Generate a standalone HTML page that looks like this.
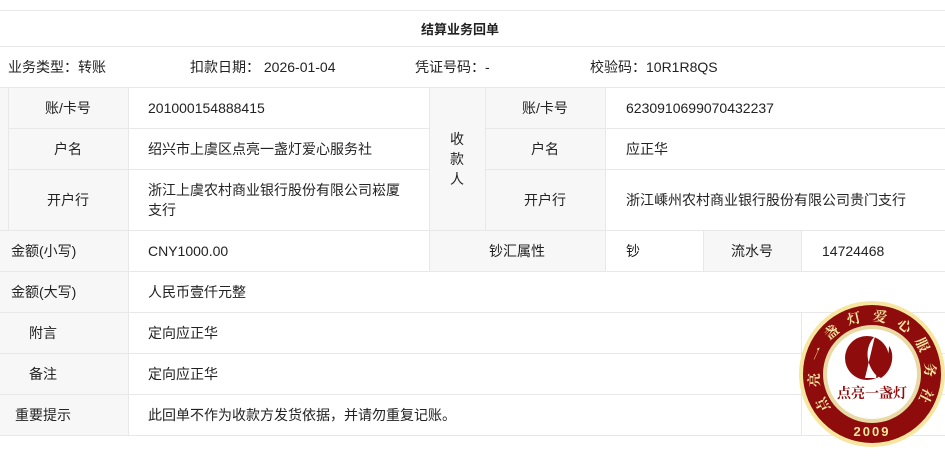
<!DOCTYPE html>
<html><head><meta charset="utf-8"><style>
body{margin:0;width:945px;height:457px;background:#fff;font-family:"Liberation Sans","Noto Sans CJK SC",sans-serif;font-size:14px;color:#222;position:relative;overflow:hidden}
.c{position:absolute;box-sizing:border-box;display:flex;align-items:center}
.g{background:#f7f7f7}
.hl{position:absolute;height:1px;background:#e8e8e8;left:0;width:945px}
.vl{position:absolute;width:1px;background:#e8e8e8}
.ctr{justify-content:center;text-align:center}
</style></head><body>
<div class="hl" style="top:10px"></div>
<div class="c ctr" style="left:0;top:11px;width:920px;height:35px;font-weight:bold;font-size:13px">结算业务回单</div>
<div class="hl" style="top:46px"></div>
<div class="c" style="left:8px;top:47px;height:40px">业务类型：转账</div>
<div class="c" style="left:190px;top:47px;height:40px">扣款日期：&nbsp;2026-01-04</div>
<div class="c" style="left:415px;top:47px;height:40px">凭证号码：-</div>
<div class="c" style="left:590px;top:47px;height:40px">校验码：10R1R8QS</div>
<div class="hl" style="top:87px"></div>
<div class="c g" style="left:0;top:88px;width:128px;height:142px"></div>
<div class="c g" style="left:429px;top:88px;width:176px;height:142px"></div>
<div class="c g" style="left:0;top:231px;width:128px;height:204px"></div>
<div class="c g" style="left:429px;top:231px;width:176px;height:40px"></div>
<div class="c g" style="left:703px;top:231px;width:98px;height:40px"></div>
<div class="vl" style="left:8px;top:88px;height:142px"></div>
<div class="vl" style="left:128px;top:88px;height:347px"></div>
<div class="vl" style="left:429px;top:88px;height:183px"></div>
<div class="vl" style="left:485px;top:88px;height:142px"></div>
<div class="vl" style="left:605px;top:88px;height:183px"></div>
<div class="vl" style="left:703px;top:231px;height:40px"></div>
<div class="vl" style="left:801px;top:231px;height:40px"></div>
<div class="vl" style="left:801px;top:313px;height:122px"></div>
<div class="hl" style="top:128px;left:8px;width:421px"></div>
<div class="hl" style="top:169px;left:8px;width:421px"></div>
<div class="hl" style="top:128px;left:485px;width:460px"></div>
<div class="hl" style="top:169px;left:485px;width:460px"></div>
<div class="hl" style="top:230px"></div>
<div class="hl" style="top:271px"></div>
<div class="hl" style="top:312px"></div>
<div class="hl" style="top:353px"></div>
<div class="hl" style="top:394px"></div>
<div class="hl" style="top:435px"></div>
<div class="c ctr" style="left:8px;top:88px;width:120px;height:40px">账/卡号</div>
<div class="c ctr" style="left:8px;top:129px;width:120px;height:40px">户名</div>
<div class="c ctr" style="left:8px;top:170px;width:120px;height:60px">开户行</div>
<div class="c" style="left:148px;top:88px;height:40px">201000154888415</div>
<div class="c" style="left:148px;top:129px;height:40px">绍兴市上虞区点亮一盏灯爱心服务社</div>
<div class="c" style="left:148px;top:170px;height:60px;width:260px;line-height:20px">浙江上虞农村商业银行股份有限公司崧厦支行</div>
<div class="c ctr" style="left:429px;top:88px;width:56px;height:142px;line-height:20px">收<br>款<br>人</div>
<div class="c ctr" style="left:485px;top:88px;width:120px;height:40px">账/卡号</div>
<div class="c ctr" style="left:485px;top:129px;width:120px;height:40px">户名</div>
<div class="c ctr" style="left:485px;top:170px;width:120px;height:60px">开户行</div>
<div class="c" style="left:626px;top:88px;height:40px">6230910699070432237</div>
<div class="c" style="left:626px;top:129px;height:40px">应正华</div>
<div class="c" style="left:626px;top:170px;height:60px">浙江嵊州农村商业银行股份有限公司贵门支行</div>
<div class="c" style="left:11px;top:231px;height:40px">金额(小写)</div>
<div class="c" style="left:148px;top:231px;height:40px">CNY1000.00</div>
<div class="c ctr" style="left:429px;top:231px;width:176px;height:40px">钞汇属性</div>
<div class="c" style="left:626px;top:231px;height:40px">钞</div>
<div class="c ctr" style="left:703px;top:231px;width:98px;height:40px">流水号</div>
<div class="c" style="left:822px;top:231px;height:40px">14724468</div>
<div class="c" style="left:11px;top:272px;height:40px">金额(大写)</div>
<div class="c" style="left:148px;top:272px;height:40px">人民币壹仟元整</div>
<div class="c" style="left:29px;top:313px;height:40px">附言</div>
<div class="c" style="left:148px;top:313px;height:40px">定向应正华</div>
<div class="c" style="left:29px;top:354px;height:40px">备注</div>
<div class="c" style="left:148px;top:354px;height:40px">定向应正华</div>
<div class="c" style="left:15px;top:395px;height:40px">重要提示</div>
<div class="c" style="left:148px;top:395px;height:40px">此回单不作为收款方发货依据，并请勿重复记账。</div>
<svg style="position:absolute;left:799px;top:300px" width="146" height="148" viewBox="0 0 146 148">
<defs><path id="arc" d="M32.4,108 A53,53 0 1 1 113.6,108"/></defs>
<circle cx="73" cy="74" r="73" fill="#f6e6a0"/>
<circle cx="73" cy="74" r="69" fill="#8e0c0c"/>
<circle cx="73" cy="74" r="49" fill="#e9d9a5"/>
<circle cx="73" cy="74" r="45" fill="#fff"/>
<circle cx="68" cy="58" r="22" fill="#8e0c0c"/>
<path d="M76,36 C66,46 66,62 76,74 L80,78 L66,78 Z" fill="#fff"/>
<path d="M82,78 C94,70 96,54 90,46 C90,58 86,68 78,76 Z" fill="#8e0c0c"/>
<path d="M78,78 L78,52 M78,62 L84,56 M78,58 L73,53" stroke="#8e0c0c" stroke-width="1.5" fill="none"/>
<text x="73" y="98" text-anchor="middle" font-size="14" fill="#8e0c0c" font-family="'Noto Serif CJK SC',serif" font-weight="bold">点亮一盏灯</text>
<text font-size="14" fill="#f6e6a0" font-family="'Noto Serif CJK SC',serif" font-weight="bold" letter-spacing="10"><textPath href="#arc">点亮一盏灯爱心服务社</textPath></text>
<text x="73" y="136" text-anchor="middle" font-size="13" fill="#f6e6a0" font-weight="bold" letter-spacing="2">2009</text>
</svg>
</body></html>
